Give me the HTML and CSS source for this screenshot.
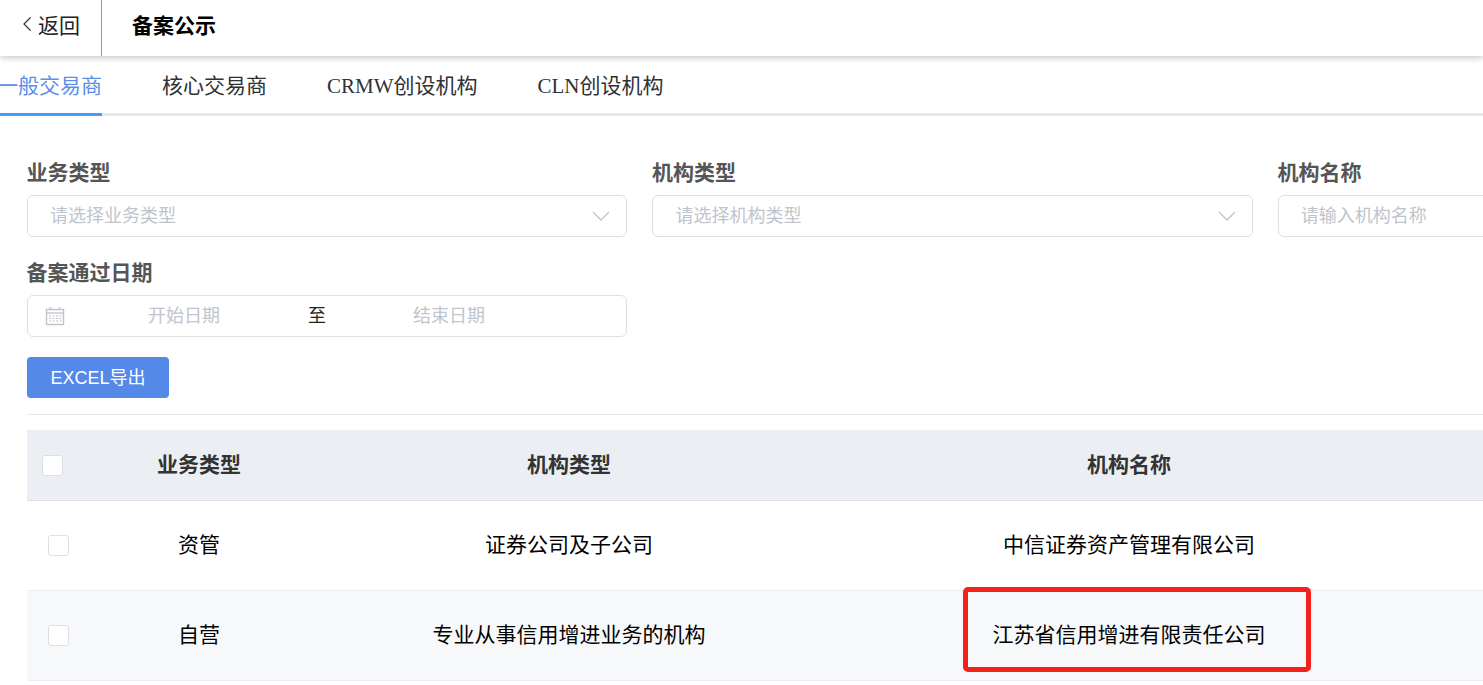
FILE: index.html
```html
<!DOCTYPE html>
<html lang="zh-CN">
<head>
<meta charset="utf-8">
<title>备案公示</title>
<link rel="stylesheet" href="styles.css">
</head>
<body>
<header class="topbar">
  <a class="back">
    <svg class="back-icon" viewBox="0 0 10 16" width="10" height="16"><path d="M8.500 1.500 2 8l6.500 6.500" fill="none" stroke="#333" stroke-width="1.200"/></svg>
    <span>返回</span>
  </a>
  <h1 class="title">备案公示</h1>
</header>
<nav class="tabs">
  <a class="tab active">一般交易商</a>
  <a class="tab">核心交易商</a>
  <a class="tab">CRMW创设机构</a>
  <a class="tab">CLN创设机构</a>
</nav>
<main class="content">
  <section class="form">
    <div class="field">
      <label class="label">业务类型</label>
      <div class="input">
        <span class="placeholder">请选择业务类型</span>
        <svg class="chevron" viewBox="0 0 18 10" width="18" height="10"><path d="M1 1l8 8 8-8" fill="none" stroke="#c0c4cc" stroke-width="1.400"/></svg>
      </div>
    </div>
    <div class="field">
      <label class="label">机构类型</label>
      <div class="input">
        <span class="placeholder">请选择机构类型</span>
        <svg class="chevron" viewBox="0 0 18 10" width="18" height="10"><path d="M1 1l8 8 8-8" fill="none" stroke="#c0c4cc" stroke-width="1.400"/></svg>
      </div>
    </div>
    <div class="field">
      <label class="label">机构名称</label>
      <div class="input">
        <span class="placeholder">请输入机构名称</span>
      </div>
    </div>
    <div class="field">
      <label class="label">备案通过日期</label>
      <div class="input date">
        <svg class="calendar" viewBox="0 0 20 20" width="20" height="20">
          <path d="M1.500 3.500h17v15h-17z" fill="none" stroke="#c0c4cc" stroke-width="1.400"/>
          <path d="M1.500 7h17" stroke="#c0c4cc" stroke-width="1.400"/>
          <path d="M5.500 1v3M14.500 1v3" stroke="#c0c4cc" stroke-width="1.400"/>
          <path d="M4 10h2M7.500 10h2M11 10h2M14.500 10h2M4 12.500h2M7.500 12.500h2M11 12.500h2M14.500 12.500h2M4 15h2M7.500 15h2M11 15h2M14.500 15h2" stroke="#c0c4cc" stroke-width="1.200"/>
        </svg>
        <span class="placeholder date-start">开始日期</span>
        <span class="date-sep">至</span>
        <span class="placeholder date-end">结束日期</span>
      </div>
    </div>
  </section>
  <button class="export" type="button">EXCEL导出</button>
  <hr class="divider">
  <div class="table">
    <div class="row head">
      <div class="cell check-cell"><span class="checkbox"></span></div>
      <div class="cell">业务类型</div>
      <div class="cell">机构类型</div>
      <div class="cell">机构名称</div>
    </div>
    <div class="row body">
      <div class="cell check-cell"><span class="checkbox"></span></div>
      <div class="cell">资管</div>
      <div class="cell">证券公司及子公司</div>
      <div class="cell">中信证券资产管理有限公司</div>
    </div>
    <div class="row body striped">
      <div class="cell check-cell"><span class="checkbox"></span></div>
      <div class="cell">自营</div>
      <div class="cell">专业从事信用增进业务的机构</div>
      <div class="cell">江苏省信用增进有限责任公司</div>
    </div>
  </div>
</main>
<div class="annotation"></div>
</body>
</html>
```

FILE: styles.css
```css
* { box-sizing: border-box; }
html, body { margin: 0; height: 685px; overflow: hidden; background: #fff; }
body {
  position: relative;
  width: 1483px;
  font-family: "Liberation Sans", "Noto Sans CJK SC", sans-serif;
  font-size: 21px;
  color: #000;
}
.topbar {
  display: flex;
  align-items: center;
  height: 56px;
  background: #fff;
  box-shadow: 0 2px 6px rgba(0, 0, 0, 0.22);
  position: relative;
}
.back {
  display: flex;
  align-items: center;
  gap: 6px;
  width: 102px;
  height: 56px;
  padding: 0 0 8px 22px;
  border-right: 1px solid #999;
  color: #222;
}
.back-icon { flex: none; }
.title {
  margin: 0 0 8px 30px;
  font-size: 21px;
  font-weight: 700;
  color: #000;
}
.tabs {
  display: flex;
  gap: 60px;
  height: 60px;
  border-bottom: 3px solid #e4e7ed;
}
.tab {
  height: 60px;
  line-height: 60px;
  font-family: "Liberation Serif", "Noto Sans CJK SC", serif;
  font-size: 21px;
  color: #303133;
  white-space: nowrap;
}
.tab.active {
  margin-left: -3px;
  color: #5b8fe8;
  border-bottom: 3px solid #409eff;
}
.content { padding: 0 0 0 27px; }
.form {
  display: grid;
  grid-template-columns: repeat(3, 600.4px);
  column-gap: 25px;
  padding-top: 41px;
}
.field { height: 100px; }
.label {
  display: block;
  height: 38px;
  margin-left: -0.4px;
  line-height: 32px;
  font-size: 21px;
  font-weight: 700;
  color: #555;
}
.input {
  display: flex;
  align-items: center;
  justify-content: space-between;
  height: 42px;
  padding: 0 16px 0 22px;
  border: 1px solid #dcdfe6;
  border-radius: 6px;
  background: #fff;
}
.placeholder { margin-bottom: 5px; font-size: 18px; color: #c0c4cc; white-space: nowrap; }
.date { justify-content: flex-start; padding-left: 17px; padding-right: 0; }
.calendar { flex: none; margin-right: 5px; }
.date-start, .date-end { text-align: center; }
.date-start { width: 228px; }
.date-sep { width: 38px; margin-bottom: 5px; text-align: center; font-size: 18px; color: #222; }
.date-end { width: 226px; }
.export {
  display: block;
  width: 142px;
  height: 41px;
  margin: 0;
  padding: 0 0 4px;
  border: 0;
  border-radius: 4px;
  background: #5589e8;
  color: #fff;
  font-family: inherit;
  font-size: 18px;
}
.divider {
  height: 1px;
  margin: 16px 0 15px;
  border: 0;
  background: #e4e7ed;
}
.row {
  display: grid;
  grid-template-columns: 62px 220px 520px 600px 54px;
  align-items: center;
  width: 1456px;
}
.cell { text-align: center; }
.head {
  height: 71px;
  padding-bottom: 4px;
  background: #ebeff3;
  border-bottom: 1px solid #dcdfe6;
  font-weight: 700;
  color: #333;
}
.head .check-cell { margin-top: 4px; }
.body { height: 90px; padding-bottom: 5px; border-bottom: 1px solid #ebeef5; }
.body .check-cell { margin-top: 5px; }
.striped { background: #f7f8fa; }
.check-cell { display: flex; justify-content: center; }
.head .check-cell { justify-content: flex-start; padding-left: 15px; }
.checkbox {
  display: block;
  width: 21px;
  height: 21px;
  border: 1px solid #dcdfe6;
  border-radius: 3px;
  background: #fff;
}
.annotation {
  position: absolute;
  left: 963px;
  top: 587px;
  width: 348px;
  height: 85px;
  border: 5px solid #f5221b;
  border-radius: 5px;
}
```
